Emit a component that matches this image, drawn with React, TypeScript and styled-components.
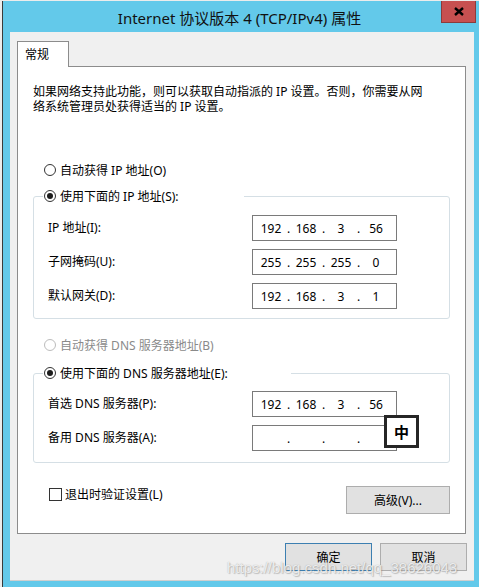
import styled, { createGlobalStyle } from "styled-components";

const GlobalStyle = createGlobalStyle`
  html, body {
    margin: 0;
    padding: 0;
  }
  body {
    background: #ececec;
    font-family: "Noto Sans", "Noto Sans CJK SC", sans-serif;
    font-size: 12px;
    color: #000;
  }
`;

const Screen = styled.div`
  position: relative;
  width: 479px;
  height: 587px;
  padding: 1px 0 0 2px;
  box-sizing: border-box;
  background: #ececec;
  overflow: hidden;
`;

const Window = styled.div`
  height: 586px;
  box-sizing: border-box;
  background: #63c9ea;
  border-left: 1px solid #3a3a3a;
  display: flex;
  flex-direction: column;
`;

const TitleBar = styled.div`
  height: 31px;
  padding-right: 3px;
  display: grid;
  grid-template-columns: 1fr auto 1fr;
  align-items: center;
`;

const Title = styled.div`
  grid-column: 2;
  font-size: 15px;
  color: #111;
  white-space: nowrap;
  padding-top: 1px;
`;

const CloseButton = styled.div`
  grid-column: 3;
  justify-self: end;
  align-self: start;
  width: 35px;
  height: 22px;
  box-sizing: border-box;
  background: #c75050;
  border: 1px solid #8b3b3b;
  border-top: none;
  display: flex;
  align-items: center;
  justify-content: center;
`;

const Body = styled.div`
  flex: 1;
  margin: 0 5px 6px 7px;
  padding: 9px 7px 0 7px;
  background: #f0f0f0;
  border-bottom: 1px solid #cfcfcf;
  box-sizing: border-box;
  display: flex;
  flex-direction: column;
`;

const TabStrip = styled.div`
  display: flex;
`;

const Tab = styled.div`
  position: relative;
  z-index: 1;
  width: 52px;
  height: 26px;
  margin-bottom: -1px;
  box-sizing: border-box;
  padding: 0 0 1px 7px;
  background: #fff;
  border: 1px solid #8c8c8c;
  border-bottom: none;
  display: flex;
  align-items: center;
`;

const Panel = styled.div`
  width: 449px;
  height: 468px;
  box-sizing: border-box;
  padding: 17px 15px 0;
  background: #fff;
  border: 1px solid #8c8c8c;
  display: flex;
  flex-direction: column;
`;

const Description = styled.p`
  margin: 0;
  line-height: 15px;
`;

const RadioRow = styled.label<{ $top?: number; $disabled?: boolean }>`
  display: flex;
  align-items: center;
  gap: 4px;
  height: 16px;
  margin-top: ${({ $top }) => $top ?? 0}px;
  padding-left: 11px;
  white-space: nowrap;
  color: ${({ $disabled }) => ($disabled ? "#8a8a8a" : "#000")};
`;

const RadioDot = styled.span<{ $checked?: boolean; $disabled?: boolean }>`
  position: relative;
  width: 12px;
  height: 12px;
  box-sizing: border-box;
  border-radius: 50%;
  background: #fff;
  border: 1px solid ${({ $disabled }) => ($disabled ? "#bcbcbc" : "#333")};
  flex-shrink: 0;

  &::after {
    content: "";
    display: ${({ $checked }) => ($checked ? "block" : "none")};
    position: absolute;
    left: 2px;
    top: 2px;
    width: 6px;
    height: 6px;
    border-radius: 50%;
    background: #1c1c1c;
  }
`;

const Group = styled.fieldset<{ $top: number; $bottom: number; $padTop: number }>`
  margin: ${({ $top }) => $top}px 0 0;
  padding: ${({ $padTop }) => $padTop}px 0 ${({ $bottom }) => $bottom}px 9px;
  min-width: 0;
  border: 1px solid #d5dfe5;
  border-radius: 3px;
`;

const Legend = styled.legend<{ $width: number }>`
  width: ${({ $width }) => $width}px;
  padding: 0;
  margin: 0;

  ${RadioRow} {
    padding-left: 1px;
  }
`;

const FieldGrid = styled.div`
  display: grid;
  grid-template-columns: 204px 145px;
  row-gap: 8px;
  padding-left: 5px;
`;

const FieldLabel = styled.span`
  height: 26px;
  line-height: 26px;
  white-space: nowrap;
`;

const IPField = styled.div`
  position: relative;
  height: 26px;
  box-sizing: border-box;
  padding-left: 3px;
  border: 1px solid #7a7a7a;
  background: #fff;
  display: flex;
  align-items: center;
`;

const Octet = styled.span`
  width: 30px;
  text-align: center;
`;

const Dot = styled.span`
  width: 5px;
  text-align: center;
`;

const ImeBadge = styled.div`
  position: absolute;
  left: 131px;
  top: -11px;
  width: 35px;
  height: 33px;
  box-sizing: border-box;
  border: 3px solid #262626;
  background: #fff;
  display: flex;
  align-items: center;
  justify-content: center;
  font-size: 15px;
  font-weight: 700;
`;

const BottomRow = styled.div`
  margin-top: 23px;
  display: flex;
  justify-content: space-between;
  align-items: flex-start;
`;

const CheckRow = styled.label`
  display: flex;
  align-items: center;
  gap: 3px;
  height: 16px;
  padding-left: 16px;
`;

const CheckBox = styled.span`
  width: 13px;
  height: 13px;
  box-sizing: border-box;
  border: 1px solid #333;
  background: #fff;
`;

const Button = styled.div<{ $width: number; $default?: boolean }>`
  width: ${({ $width }) => $width}px;
  height: 28px;
  box-sizing: border-box;
  background: #e1e1e1;
  border: 1px solid ${({ $default }) => ($default ? "#3c7fb1" : "#adadad")};
  display: flex;
  align-items: center;
  justify-content: center;
`;

const ButtonRow = styled.div`
  margin-top: 9px;
  display: flex;
  justify-content: flex-end;
  gap: 8px;
`;

const Watermark = styled.div`
  position: absolute;
  left: 227px;
  top: 559px;
  font-family: "Liberation Sans", Arial, sans-serif;
  font-size: 15px;
  line-height: 18px;
  color: rgba(255, 255, 255, 0.8);
  text-shadow: 0 0 1px rgba(110, 110, 110, 0.55), 1px 1px 1px rgba(110, 110, 110, 0.35);
  pointer-events: none;
`;

const IpValue = ({ octets }: { octets: string[] }) => (
  <>
    {octets.map((o, i) => (
      <span key={i} style={{ display: "contents" }}>
        <Octet>{o}</Octet>
        {i < 3 && <Dot>.</Dot>}
      </span>
    ))}
  </>
);

const ipRows = [
  { label: "IP 地址(I):", value: ["192", "168", "3", "56"] },
  { label: "子网掩码(U):", value: ["255", "255", "255", "0"] },
  { label: "默认网关(D):", value: ["192", "168", "3", "1"] },
];

export default function App() {
  return (
    <Screen>
      <GlobalStyle />
      <Window>
        <TitleBar>
          <Title>Internet 协议版本 4 (TCP/IPv4) 属性</Title>
          <CloseButton>
            <svg width="10" height="9" viewBox="0 0 10 9">
              <path d="M1 1 L9 8 M9 1 L1 8" stroke="#000" strokeWidth="2.4" />
            </svg>
          </CloseButton>
        </TitleBar>
        <Body>
          <TabStrip>
            <Tab>常规</Tab>
          </TabStrip>
          <Panel>
            <Description>
              如果网络支持此功能，则可以获取自动指派的 IP 设置。否则，你需要从网
              <br />
              络系统管理员处获得适当的 IP 设置。
            </Description>

            <RadioRow $top={48}>
              <RadioDot />
              自动获得 IP 地址(O)
            </RadioRow>

            <Group $top={10} $padTop={11} $bottom={9}>
              <Legend $width={201}>
                <RadioRow>
                  <RadioDot $checked />
                  使用下面的 IP 地址(S):
                </RadioRow>
              </Legend>
              <FieldGrid>
                {ipRows.map((r) => (
                  <span key={r.label} style={{ display: "contents" }}>
                    <FieldLabel>{r.label}</FieldLabel>
                    <IPField>
                      <IpValue octets={r.value} />
                    </IPField>
                  </span>
                ))}
              </FieldGrid>
            </Group>

            <RadioRow $top={18} $disabled>
              <RadioDot $disabled />
              自动获得 DNS 服务器地址(B)
            </RadioRow>

            <Group $top={12} $padTop={10} $bottom={11}>
              <Legend $width={248}>
                <RadioRow>
                  <RadioDot $checked />
                  使用下面的 DNS 服务器地址(E):
                </RadioRow>
              </Legend>
              <FieldGrid>
                <FieldLabel>首选 DNS 服务器(P):</FieldLabel>
                <IPField>
                  <IpValue octets={["192", "168", "3", "56"]} />
                </IPField>
                <FieldLabel>备用 DNS 服务器(A):</FieldLabel>
                <IPField>
                  <IpValue octets={["", "", "", ""]} />
                  <ImeBadge>中</ImeBadge>
                </IPField>
              </FieldGrid>
            </Group>

            <BottomRow>
              <CheckRow>
                <CheckBox />
                退出时验证设置(L)
              </CheckRow>
              <Button $width={104}>高级(V)...</Button>
            </BottomRow>
          </Panel>
          <ButtonRow>
            <Button $width={87} $default>
              确定
            </Button>
            <Button $width={87}>取消</Button>
          </ButtonRow>
        </Body>
      </Window>
      <Watermark>https://blog.csdn.net/qq_38626043</Watermark>
    </Screen>
  );
}
